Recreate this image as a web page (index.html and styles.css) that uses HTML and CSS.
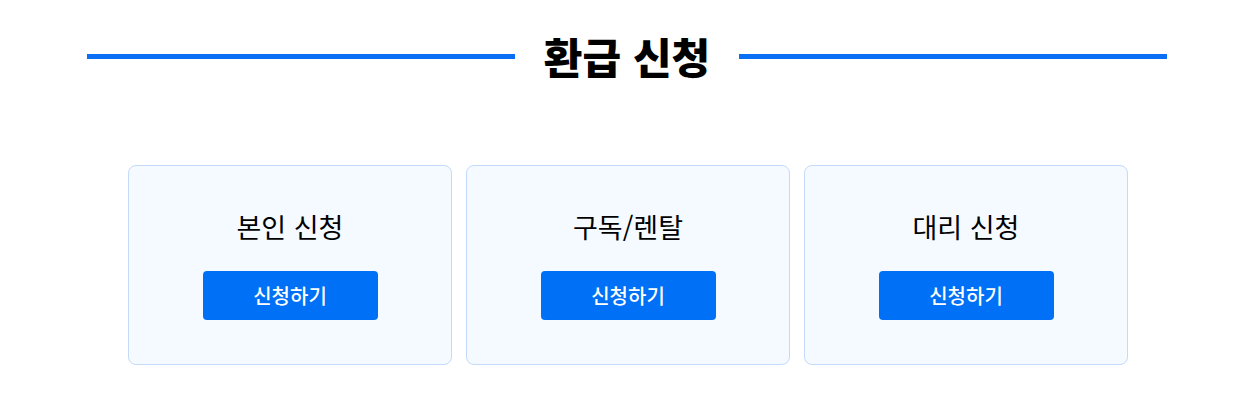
FILE: index.html
```html
<!DOCTYPE html>
<html lang="ko">
<head>
<meta charset="utf-8">
<link rel="stylesheet" href="styles.css">
</head>
<body>
<main class="page">
  <header class="section-head">
    <span class="rule"></span>
    <h1 class="section-title">환급 신청</h1>
    <span class="rule"></span>
  </header>
  <section class="cards">
    <div class="card">
      <h2 class="card-title">본인 신청</h2>
      <button class="btn">신청하기</button>
    </div>
    <div class="card">
      <h2 class="card-title">구독/렌탈</h2>
      <button class="btn">신청하기</button>
    </div>
    <div class="card">
      <h2 class="card-title">대리 신청</h2>
      <button class="btn">신청하기</button>
    </div>
  </section>
</main>
</body>
</html>
```
FILE: styles.css
```css
html, body {
  margin: 0;
  padding: 0;
  background: #ffffff;
}
body {
  font-family: "Noto Sans CJK KR", "Noto Sans", sans-serif;
  color: #000;
}
.page {
  display: flex;
  flex-direction: column;
  align-items: center;
}
.section-head {
  width: 1080px;
  display: flex;
  align-items: center;
  gap: 29px;
  margin-top: 31px;
  height: 50px;
}
.rule {
  flex: 1;
  height: 5px;
  background: #0a6ff5;
}
.section-title {
  margin: 0;
  font-size: 42px;
  font-weight: 900;
  line-height: 50px;
  letter-spacing: 0;
}
.cards {
  display: flex;
  gap: 14px;
  margin-top: 84px;
  padding-left: 2px;
}
.card {
  box-sizing: border-box;
  width: 324px;
  height: 200px;
  border: 1px solid #c3dafa;
  border-radius: 8px;
  background: #f4faff;
  display: flex;
  flex-direction: column;
  align-items: center;
  padding-top: 42px;
}
.card-title {
  margin: 0;
  font-size: 27px;
  font-weight: 400;
  line-height: 38px;
}
.btn {
  margin-top: 25px;
  width: 175px;
  height: 49px;
  border: 0;
  border-radius: 4px;
  background: #0070f7;
  color: #fff;
  font-family: inherit;
  font-size: 20px;
  font-weight: 500;
}
```
